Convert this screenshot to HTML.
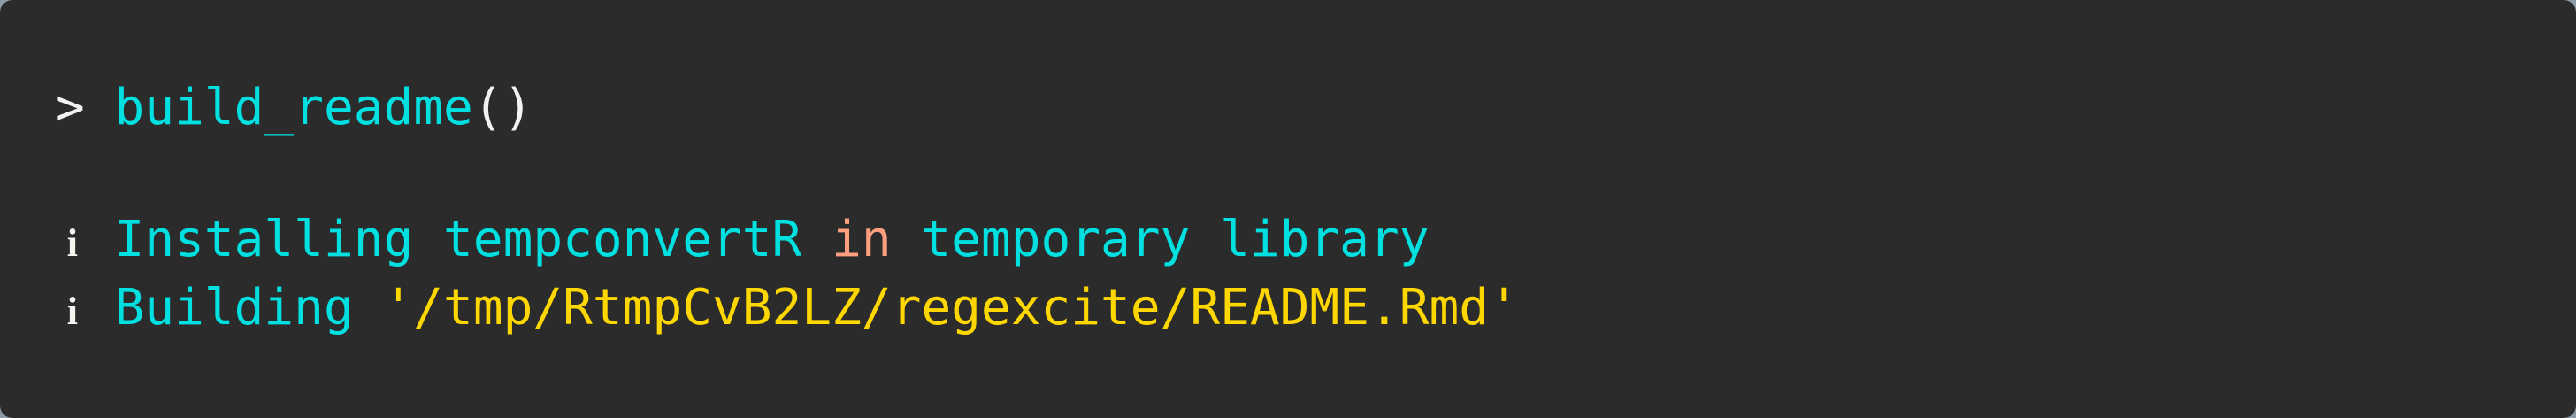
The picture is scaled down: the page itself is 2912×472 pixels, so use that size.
<!DOCTYPE html>
<html><head><meta charset="utf-8"><style>
html,body{margin:0;padding:0;background:#8a9aa8;}
.box{position:absolute;left:0;top:0;width:2912px;height:472px;background:#2b2b2b;border-radius:14px;overflow:hidden;}
.l{position:absolute;left:62px;font-family:"DejaVu Sans Mono","Liberation Mono",monospace;font-size:56.1px;white-space:pre;line-height:1;}
.w{color:#f2f2f2}.c{color:#00e0e0}.y{color:#ffd700}.s{color:#ff9f7f}
.i{display:inline-block;width:33.78px;text-align:center;font-family:"Liberation Serif",serif;font-weight:bold;color:#f5f5f0;font-size:44px;position:relative;left:3px;}
</style></head><body><div class="box">
<div class="l" style="top:94px"><span class="w">&gt; </span><span class="c">build_readme</span><span class="w">()</span></div>
<div class="l" style="top:243px"><span class="i">i</span> <span class="c">Installing tempconvertR </span><span class="s">in</span><span class="c"> temporary library</span></div>
<div class="l" style="top:320px"><span class="i">i</span> <span class="c">Building </span><span class="y">'/tmp/RtmpCvB2LZ/regexcite/README.Rmd'</span></div>
</div></body></html>
